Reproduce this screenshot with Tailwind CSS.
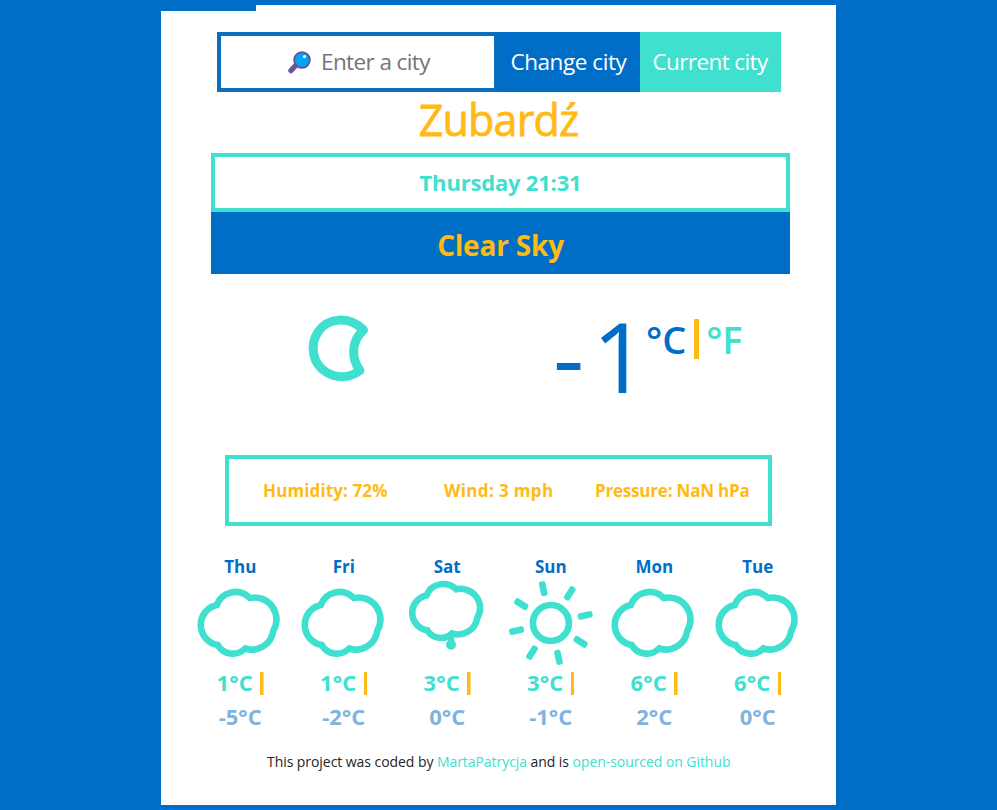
<!DOCTYPE html>
<html lang="en">
<head>
<meta charset="utf-8">
<title>Weather</title>
<script src="https://cdn.jsdelivr.net/npm/@tailwindcss/browser@4"></script>
</head>
<body class="w-[997px] h-[810px] overflow-hidden bg-[#006ec7] font-['Open_Sans','Noto_Sans',sans-serif] pt-[5px] pl-[161px]">
<main class="relative w-[675px] h-[800px] bg-white pt-[27px]">
  <div class="absolute left-0 top-0 w-[95px] h-[6px] bg-[#006ec7]"></div>
  <form class="flex h-[60px] w-[564px] ml-[56px] text-[22.5px] tracking-[-0.6px] leading-[60px] whitespace-nowrap">
    <div class="flex w-[281px] border-4 border-[#0a6ebd] pl-[67px] leading-[52px] text-[#757575]">
      <svg class="mt-[15px] w-[23px] h-[23px] shrink-0" viewBox="0 0 23 23"><path d="M3 19.5L9 13" stroke="#6b5498" stroke-width="5.5" stroke-linecap="round"/><circle cx="14" cy="9" r="7.9" fill="#00a4f2" stroke="#6b4f96" stroke-width="1.7"/><circle cx="16.5" cy="5.5" r="1.6" fill="#fff"/></svg>
      <span class="ml-[10px]">Enter a city</span>
    </div>
    <div class="w-[142px] bg-[#006ec7] text-white pl-[12.5px] tracking-[-0.45px]">Change city</div>
    <div class="w-[141px] bg-[#40e0d0] text-white pl-[12.5px]">Current city</div>
  </form>
  <h1 class="h-[61px] leading-[56px] text-center text-[43px] tracking-[-0.8px] [-webkit-text-stroke:0.8px_#ffba15] text-[#ffba15]">Zubardź</h1>
  <section class="w-[579px] ml-[50px] text-center font-bold">
    <div class="h-[59px] border-4 border-[#40e0d0] text-[#40e0d0] text-[22px] tracking-[-0.2px] leading-[51px]">Thursday 21:31</div>
    <div class="h-[62px] bg-[#006ec7] text-[#ffba15] text-[28px] tracking-[-0.2px] leading-[66px]">Clear Sky</div>
  </section>
  <section class="flex h-[181px] text-[#006ec7]">
    <svg class="ml-[144px] mt-[36px] w-[70px] h-[76px] shrink-0" viewBox="305 310 70 76" fill="none" stroke="#40e0d0" stroke-width="9" stroke-linejoin="round"><path d="M363.5 330C349 315 327 318 318 332C309 346 313 364 326 372C337 379 350 378 360 370.500C351 359 351 341 363.500 330Z"/></svg>
    <div class="ml-[178px] mt-[28px] w-[93px] text-[97px] leading-[106px] whitespace-nowrap"><span class="tracking-[8px]">-</span><span class="tracking-[-8px]">1</span></div>
    <div class="flex mt-[37px] text-[38px] leading-[56px] font-semibold"><span>°C</span><i class="mt-[8px] ml-[8px] w-[5px] h-[40px] bg-[#ffba15]"></i><span class="text-[#40e0d0] ml-[7px] tracking-[-0.3px]">°F</span></div>
  </section>
  <section class="flex ml-[64px] w-[547px] h-[71px] border-4 border-[#40e0d0] text-[#ffba15] font-bold text-[17px] leading-[63px] pl-[34px] whitespace-nowrap">
    <div class="w-[181px] tracking-[0.12px]">Humidity: 72%</div><div class="w-[151px] tracking-[0.35px]">Wind: 3 mph</div><div class="tracking-[-0.2px]">Pressure: NaN hPa</div>
  </section>
  <section id="forecast" class="grid grid-cols-6 w-[621px] h-[216px] ml-[27.5px] pt-[29px]"></section>
  <footer class="ml-[106px] mt-[10px] text-[14px] leading-[20px] tracking-[-0.06px] text-[#212529] whitespace-nowrap">This project was coded by <a class="text-[#40e0d0]">MartaPatrycja</a> and is <a class="text-[#40e0d0]">open-sourced on Github</a></footer>
</main>
<script>
const cloud = '<path vector-effect="non-scaling-stroke" d="M217.5 605A20 20 0 0 1 250.5 598A22 22 0 0 1 274 631A21.500 21.500 0 0 1 246 648.500A17.500 17.500 0 0 1 218.500 645A20.400 20.400 0 0 1 217.500 605Z"/>';
const rays = [0, 45, 90, 135, 180, 225, 270, 315]
  .map(a => `<rect x="-10" y="-128" width="20" height="45" rx="7" fill="#40e0d0" stroke="none" transform="rotate(${a - 12.5})"/>`).join('');
const icons = {
  cloud,
  rain: '<g transform="translate(25.2 66) scale(.897 .875)">' + cloud + '</g><g fill="#40e0d0" stroke="none"><circle cx="244.8" cy="644.8" r="5"/><path d="M241.500 634L245 630.500L248 634V642H241.500Z"/></g>',
  sun: '<g transform="translate(240.7 623) scale(.3333)"><circle r="54" stroke-width="20"/>' + rays + '</g>'
};
const days = [['Thu','cloud','1','-5'],['Fri','cloud','1','-2'],['Sat','rain','3','0'],['Sun','sun','3','-1'],['Mon','cloud','6','2'],['Tue','cloud','6','0']];
document.getElementById('forecast').innerHTML = days.map(([d,i,h,l]) => `<article class="flex flex-col items-center font-bold whitespace-nowrap">
<h2 class="text-[17px] leading-[24px] text-[#006ec7]">${d}</h2>
<svg class="w-[90px] h-[90px] -mt-px" viewBox="195.8 578 90 90" fill="none" stroke="#40e0d0" stroke-width="6.6">${icons[i]}</svg>
<div class="flex -mt-[2px] text-[22px] tracking-[0.1px] leading-[32px] text-[#40e0d0]"><span>${h}°C</span><svg class="ml-[7.500px] mt-[6px] w-[3.500px] h-[23px]" viewBox="0 0 3.5 23"><rect width="3.500" height="23" fill="#ffba15"/></svg></div>
<div class="mt-[2px] text-[22px] leading-[32px] text-[#7fb3e0]">${l}°C</div></article>`).join('');
</script>
</body>
</html>
